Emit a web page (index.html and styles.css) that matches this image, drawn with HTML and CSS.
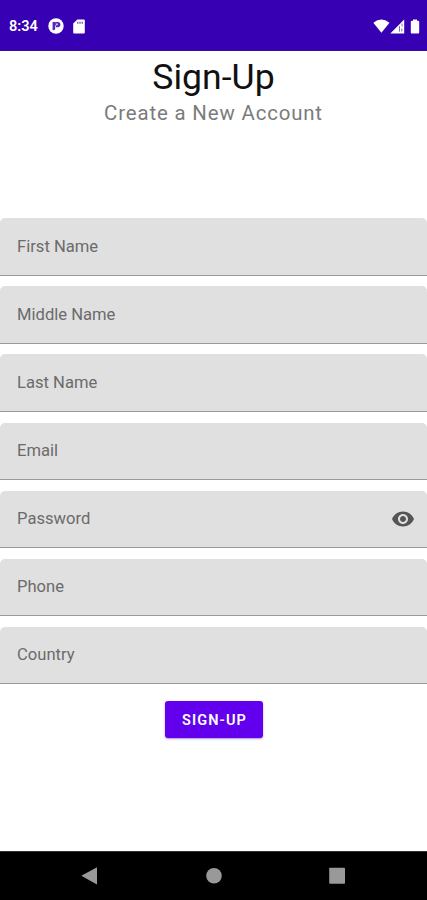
FILE: index.html
```html
<!DOCTYPE html>
<html lang="en">
<head>
<meta charset="utf-8">
<title>Sign-Up</title>
<link rel="stylesheet" href="styles.css">
</head>
<body>
<div class="screen">
  <header class="status">
    <span class="time">8:34</span>
    <svg class="app-icon" width="16" height="16" viewBox="0 0 16 16"><circle cx="8" cy="8" r="7.700" fill="#fff"/><path d="M4.600 4h2.600v6.400q0 1.900-2.600 1.900z" fill="#3700b3" opacity=".85"/><path d="M7.200 4h2.600a2.600 2.600 0 0 1 0 5.200H8V7.600H7.200z" fill="#3700b3" opacity=".85"/><path d="M8 5.500h1.700v1.800H8z" fill="#fff" opacity=".8"/></svg>
    <svg class="card-icon" width="12" height="15" viewBox="0 0 12 15"><path fill="#fff" d="M4.300.5h6.500q1 0 1 1v12q0 1-1 1H1.200q-1 0-1-1V4.600z"/><path fill="#3700b3" d="M4.200 2.700h1.200v2H4.200zm2.200 0h1.200v2H6.400zm2.200 0h1.200v2H8.600z" opacity=".75"/></svg>
    <span class="signals">
      <svg width="17" height="14" viewBox="0 0 17 14"><path fill="#fff" d="M.3 3.700Q8.300-2.700 16.500 3.700L8.400 13.700z"/></svg>
      <svg width="15" height="15" viewBox="0 0 15 15"><path fill="#fff" d="M14.200.4v14H.3z"/><path stroke="#3700b3" fill="none" d="M9.500 7.200v5.500M12 4.500v3M11.800 9.500v3" opacity=".6"/></svg>
      <svg width="10" height="15" viewBox="0 0 10 15"><path fill="#fff" d="M3 .4h4v1.400h1.200q1 0 1 1v10.700q0 1-1 1H1.800q-1 0-1-1V2.800q0-1 1-1H3z"/></svg>
    </span>
  </header>
  <main class="content">
    <h1 class="title">Sign-Up</h1>
    <p class="subtitle">Create a New Account</p>
    <form class="form">
      <div class="field"><label>First Name</label></div>
      <div class="field"><label>Middle Name</label></div>
      <div class="field"><label>Last Name</label></div>
      <div class="field"><label>Email</label></div>
      <div class="field"><label>Password</label>
        <svg class="eye" width="24" height="24" viewBox="0 0 24 24"><path fill="#555" d="M12 4.500C7 4.500 2.730 7.610 1 12c1.730 4.390 6 7.500 11 7.500s9.270-3.110 11-7.500c-1.730-4.390-6-7.500-11-7.500zM12 17c-2.760 0-5-2.240-5-5s2.240-5 5-5 5 2.240 5 5-2.240 5-5 5zm0-8c-1.660 0-3 1.340-3 3s1.340 3 3 3 3-1.340 3-3-1.340-3-3-3z"/></svg>
      </div>
      <div class="field"><label>Phone</label></div>
      <div class="field"><label>Country</label></div>
      <button class="submit" type="button">SIGN-UP</button>
    </form>
  </main>
  <nav class="navbar">
    <svg width="18" height="20" viewBox="0 0 18 20"><path fill="#999" d="M.3 9.800 16 1.200v17.200z"/></svg>
    <svg width="18" height="20" viewBox="0 0 18 20"><circle cx="9" cy="9.700" r="7.800" fill="#999"/></svg>
    <svg width="18" height="20" viewBox="0 0 18 20"><rect x="1.200" y="1.700" width="15.800" height="16" rx=".8" fill="#999"/></svg>
  </nav>
</div>
</body>
</html>
```

FILE: styles.css
```css
* { box-sizing: border-box; }
body { margin: 0; background: #fff; font-family: Roboto, sans-serif; }
.screen { width: 427px; height: 900px; display: flex; flex-direction: column; overflow: hidden; }
.status { height: 51px; flex: none; display: flex; align-items: center; padding: 2px 7px 0 9px; background: #3700b3; border-bottom: 1px solid #3510a0; color: #fff; }
.time { width: 39px; padding-top: 2px; font-size: 14.5px; font-weight: 600; line-height: 18px; }
.app-icon { margin-right: 9px; }
.signals { margin-left: auto; display: flex; align-items: center; }
.signals svg:nth-child(2) { margin-left: -1px; }
.signals svg:last-child { margin-left: 5px; }
.signals svg:first-child { margin-right: 1px; }
.content { flex: 1; display: flex; flex-direction: column; align-items: center; }
.title { margin: 5px 0 0; font-size: 35.6px; line-height: 42px; font-weight: 400; color: #111; }
.subtitle { margin: 3px 0 0; font-size: 20.4px; line-height: 24px; letter-spacing: .85px; color: #7b7b7b; }
.form { width: 100%; margin-top: 93.3px; display: flex; flex-direction: column; gap: 10.5px; }
.field { height: 57.6px; display: flex; align-items: center; justify-content: space-between; padding: 0 12px 0 17px; background: #e0e0e0; border-bottom: 1px solid #999; border-radius: 5px 5px 0 0; color: #6b6b6b; font-size: 16.6px; line-height: 20px; }
.submit { align-self: center; width: 98px; height: 37px; margin-top: 6px; padding: 3px 0 0 2px; border: 0; border-radius: 3px; background: #6200ee; box-shadow: 0 1px 2px #5530a080; color: #fff; font: 600 14.5px/20px Roboto, sans-serif; letter-spacing: 1.1px; }
.navbar { height: 49px; flex: none; display: flex; align-items: center; justify-content: space-between; padding: 0 81px; background: #000; border-top: 1px solid #333; }
```
